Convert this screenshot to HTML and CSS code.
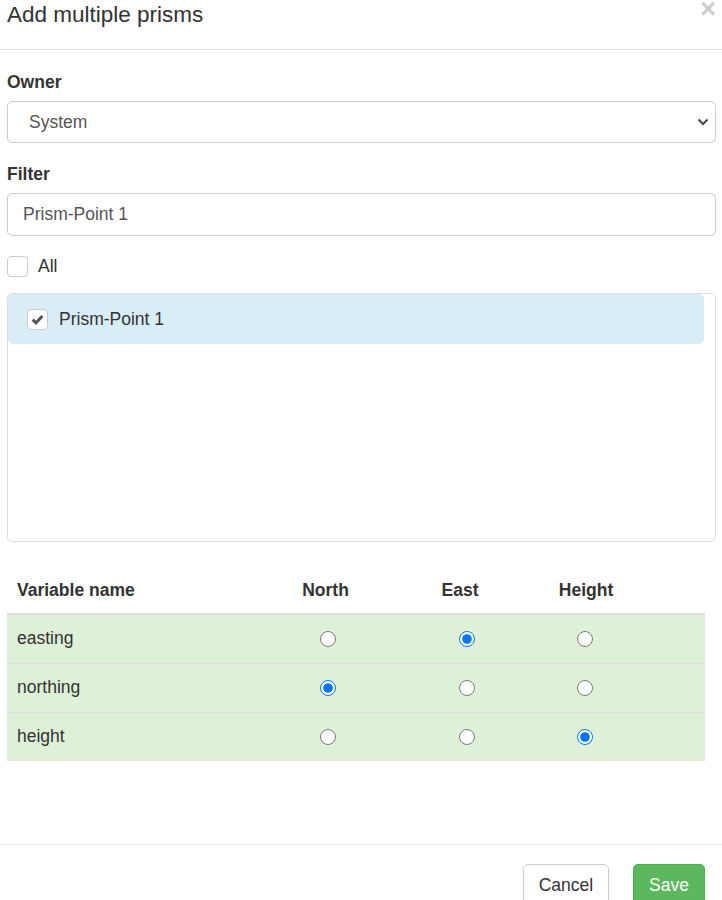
FILE: index.html
```html
<!DOCTYPE html>
<html lang="en">
<head>
<meta charset="utf-8">
<title>Add multiple prisms</title>
<link rel="stylesheet" href="styles.css">
</head>
<body>
<div class="modal">
  <div class="modal-header">
    <h4 class="modal-title">Add multiple prisms</h4>
    <span class="close">&times;</span>
  </div>
  <div class="modal-body">
    <label class="field-label">Owner</label>
    <div class="select-box">
      <span class="select-text">System</span>
      <svg class="chevron" width="12" height="8" viewBox="0 0 12 8"><path d="M1.5 1.5 L6 6 L10.5 1.5" fill="none" stroke="#444" stroke-width="2"/></svg>
    </div>
    <label class="field-label">Filter</label>
    <div class="text-input">Prism-Point 1</div>
    <div class="check-row all-row">
      <span class="cbox"></span>
      <span class="check-text">All</span>
    </div>
    <div class="list-box">
      <div class="list-item">
        <span class="cbox checked"><svg width="13" height="11" viewBox="0 0 13 11"><path d="M1.6 5.6 L5 8.8 L11.4 2" fill="none" stroke="#555" stroke-width="3"/></svg></span>
        <span class="check-text">Prism-Point 1</span>
      </div>
    </div>
    <table class="var-table">
      <colgroup>
        <col class="w-name"><col class="w-north"><col class="w-east"><col class="w-height"><col class="w-rest">
      </colgroup>
      <thead>
        <tr><th class="th-left">Variable name</th><th>North</th><th>East</th><th>Height</th><th></th></tr>
      </thead>
      <tbody>
        <tr>
          <td class="td-left">easting</td>
          <td class="c-north"><input type="radio" name="r1"></td>
          <td class="c-east"><input type="radio" name="r1" checked></td>
          <td class="c-height"><input type="radio" name="r1"></td>
          <td></td>
        </tr>
        <tr>
          <td class="td-left">northing</td>
          <td class="c-north"><input type="radio" name="r2" checked></td>
          <td class="c-east"><input type="radio" name="r2"></td>
          <td class="c-height"><input type="radio" name="r2"></td>
          <td></td>
        </tr>
        <tr>
          <td class="td-left">height</td>
          <td class="c-north"><input type="radio" name="r3"></td>
          <td class="c-east"><input type="radio" name="r3"></td>
          <td class="c-height"><input type="radio" name="r3" checked></td>
          <td></td>
        </tr>
      </tbody>
    </table>
  </div>
  <div class="modal-footer">
    <button class="btn btn-default">Cancel</button>
    <button class="btn btn-success">Save</button>
  </div>
</div>
</body>
</html>
```

FILE: styles.css
```css
html, body {
  margin: 0;
  padding: 0;
  background: #fff;
}
body {
  font-family: "Liberation Sans", Arial, sans-serif;
  font-size: 17.5px;
  line-height: 25px;
  color: #333;
  width: 722px;
  height: 900px;
  overflow: hidden;
}
.modal {
  width: 722px;
}
.modal-header {
  position: relative;
  height: 50px;
  border-bottom: 1px solid #e5e5e5;
  padding: 0 7px;
  box-sizing: content-box;
}
.modal-title {
  margin: -1px 0 0 0;
  font-size: 22.5px;
  line-height: 32px;
  font-weight: normal;
  color: #333;
}
.close {
  position: absolute;
  right: 6px;
  top: 1px;
  font-size: 27px;
  font-weight: bold;
  line-height: 18px;
  color: #000;
  opacity: 0.2;
}
.modal-body {
  padding: 19.5px 6px 0 7px;
}
.field-label {
  display: block;
  font-weight: bold;
  line-height: 25px;
  margin-bottom: 6.25px;
}
.select-box {
  height: 42.5px;
  box-sizing: border-box;
  border: 1px solid #ccc;
  border-radius: 5px;
  display: flex;
  align-items: center;
  justify-content: space-between;
  padding: 0 6px 0 21px;
  margin-bottom: 18.75px;
  color: #555;
}
.chevron {
  display: block;
}
.text-input {
  height: 42.5px;
  box-sizing: border-box;
  border: 1px solid #ccc;
  border-radius: 5px;
  padding: 7.5px 15px;
  color: #555;
  margin-bottom: 18px;
}
.check-row {
  display: flex;
  align-items: center;
  height: 25px;
}
.cbox {
  width: 21px;
  height: 21px;
  box-sizing: border-box;
  border: 1px solid #ccc;
  border-radius: 4px;
  background: #fff;
  display: flex;
  align-items: center;
  justify-content: center;
  flex: none;
}
.check-text {
  margin-left: 10px;
}
.all-row {
  margin-bottom: 14.5px;
}
.list-box {
  height: 249px;
  box-sizing: border-box;
  border: 1px solid #ddd;
  border-radius: 5px;
  padding: 0 11px 0 0;
}
.list-item {
  height: 50px;
  background: #d9edf7;
  border-radius: 5px;
  display: flex;
  align-items: center;
  padding-left: 19px;
}
.list-item .check-text {
  margin-left: 11px;
}
.var-table {
  width: 698px;
  table-layout: fixed;
  border-collapse: collapse;
  border-spacing: 0;
  margin-top: 25.5px;
  margin-bottom: 83.5px;
}
.w-name { width: 251px; }
.w-north { width: 135px; }
.w-east { width: 134px; }
.w-height { width: 118px; }
.w-rest { width: 60px; }
.var-table th {
  font-weight: bold;
  text-align: center;
  padding: 10px 10px 10px;
  line-height: 25px;
  border-bottom: 2.5px solid #ddd;
}
.var-table th.th-left {
  text-align: left;
}
.var-table td {
  background: #dff0d8;
  padding: 11.5px 10px;
  line-height: 25px;
  height: 25px;
  text-align: center;
  vertical-align: middle;
}
.var-table tbody tr + tr td {
  border-top: 1px solid #ddd;
}
.var-table td.td-left {
  text-align: left;
}
.var-table input[type="radio"] {
  width: 16px;
  height: 16px;
  margin: 0;
  vertical-align: middle;
  position: relative;
  top: -1px;
}
.c-north input[type="radio"] { margin-left: 5px; }
.c-east input[type="radio"] { margin-left: 14px; }
.c-height input[type="radio"] { margin-right: 2px; }
.modal-footer {
  border-top: 1px solid #e5e5e5;
  padding: 18.75px 17px 0 0;
  display: flex;
  justify-content: flex-end;
  gap: 24px;
}
.btn {
  font-family: "Liberation Sans", Arial, sans-serif;
  font-size: 17.5px;
  line-height: 25px;
  height: 42.5px;
  padding: 7.5px 15px;
  border-radius: 5px;
  border: 1px solid #ccc;
  box-sizing: border-box;
  margin: 0;
}
.btn-default {
  background: #fff;
  color: #333;
}
.btn-success {
  background: #5cb85c;
  border-color: #4cae4c;
  color: #fff;
}
```
